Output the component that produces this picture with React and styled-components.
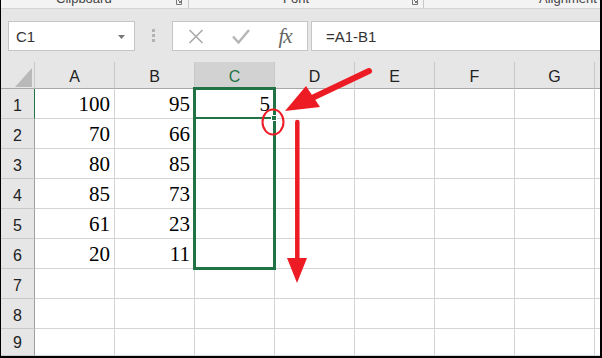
import React from "react";
import styled, { createGlobalStyle } from "styled-components";

const GlobalStyle = createGlobalStyle`
  html, body { margin: 0; padding: 0; background: #fff; }
  body { font-family: "Liberation Sans", Arial, sans-serif; }
  * { box-sizing: border-box; }
`;

const GREEN = "#217346";
const RED = "#ed1c24";

const Frame = styled.div`
  position: relative;
  width: 602px;
  height: 358px;
  overflow: hidden;
  border-left: 1px solid #000;
  border-right: 2px solid #000;
  border-bottom: 2px solid #000;
  background: #fff;
`;

const Ribbon = styled.div`
  display: flex;
  height: 9px;
  background: #f3f3f3;
  border-bottom: 1px solid #d4d4d4;
  overflow: hidden;
`;

const Group = styled.div`
  display: flex;
  align-items: flex-start;
  width: ${(p) => p.$w}px;
  flex: ${(p) => (p.$grow ? "1" : "none")};
  padding-left: ${(p) => p.$pl}px;
  padding-right: ${(p) => p.$pr || 0}px;
  border-right: ${(p) => (p.$last ? "none" : "1px solid #c8c8c8")};
  height: 8px;
`;

const GroupLabel = styled.span`
  font-size: 13px;
  line-height: 13px;
  margin-top: -8px;
  color: #444;
  white-space: nowrap;
`;

const Launcher = styled.svg`
  margin-left: auto;
  display: block;
`;

const Band = styled.div`
  display: flex;
  align-items: flex-start;
  height: 53px;
  padding: 12px 0 0 7px;
  background: #e6e6e6;
`;

const NameBox = styled.div`
  display: flex;
  align-items: center;
  justify-content: space-between;
  width: 127px;
  height: 30px;
  padding: 1px 9px 0 7px;
  background: #fff;
  border: 1px solid #c6c6c6;
  font-size: 15px;
  color: #333;
`;

const Grip = styled.div`
  display: flex;
  flex-direction: column;
  gap: 2px;
  margin: 8px 0 0 17px;
`;

const GripDot = styled.span`
  display: block;
  width: 3px;
  height: 3px;
  background: #b3b3b3;
`;

const FxBox = styled.div`
  display: flex;
  width: 136px;
  height: 30px;
  margin-left: 17px;
  background: #fff;
  border: 1px solid #c6c6c6;
`;

const FxButton = styled.div`
  display: flex;
  align-items: center;
  justify-content: center;
  width: ${(p) => p.$w}px;
  height: 100%;
`;

const FxLabel = styled.span`
  font-family: "Liberation Serif", "Times New Roman", serif;
  font-style: italic;
  font-size: 21px;
  color: #666;
  letter-spacing: -1px;
  margin-top: 1px;
`;

const FormulaInput = styled.div`
  flex: 1;
  display: flex;
  align-items: center;
  height: 30px;
  margin-left: 3px;
  padding: 1px 0 0 14px;
  background: #fff;
  border: 1px solid #c6c6c6;
  border-right: none;
  font-size: 15px;
  color: #333;
`;

const Sheet = styled.div`
  position: relative;
  display: grid;
  grid-template-columns: 34px repeat(7, 80px) 1fr;
  grid-template-rows: 27px repeat(8, 30px) 27px;
`;

const Corner = styled.div`
  position: relative;
  background: #e6e6e6;
  border-right: 1px solid #c8c8c8;
  border-bottom: 1px solid #a8a8a8;
`;

const CornerTri = styled.svg`
  position: absolute;
  left: 0;
  top: 0;
`;

const ColHead = styled.div`
  display: flex;
  align-items: flex-end;
  justify-content: center;
  padding-bottom: 3px;
  background: ${(p) => (p.$active ? "#d2d2d2" : "#e6e6e6")};
  color: ${(p) => (p.$active ? GREEN : "#222")};
  border-right: ${(p) => (p.$last ? "none" : "1px solid #c8c8c8")};
  border-bottom: 1px solid #a8a8a8;
  font-size: 16px;
  line-height: 16px;
`;

const RowHead = styled.div`
  display: flex;
  align-items: flex-end;
  justify-content: center;
  padding-bottom: 4px;
  background: #e6e6e6;
  color: #222;
  border-right: 1px solid ${(p) => (p.$active ? GREEN : "#a0a0a0")};
  border-bottom: 1px solid #c8c8c8;
  font-size: 16px;
  line-height: 16px;
`;

const Cell = styled.div`
  display: flex;
  align-items: flex-end;
  justify-content: flex-end;
  padding: 0 4px 3px 0;
  border-right: ${(p) => (p.$last ? "none" : "1px solid #d4d4d4")};
  border-bottom: 1px solid #d4d4d4;
  font-family: "Liberation Serif", "Times New Roman", serif;
  font-size: 21px;
  line-height: 21px;
  color: #000;
`;

const Selection = styled.div`
  position: absolute;
  left: 192px;
  top: 25px;
  width: 83px;
  height: 183px;
  border: 3px solid ${GREEN};
  pointer-events: none;
`;

const ActiveLine = styled.div`
  position: absolute;
  left: 195px;
  top: 55px;
  width: 77px;
  height: 2px;
  background: ${GREEN};
`;

const FillHandle = styled.div`
  position: absolute;
  left: 270px;
  top: 53px;
  width: 6px;
  height: 6px;
  background: ${GREEN};
  border: 1px solid #fff;
`;

const Annotations = styled.svg`
  position: absolute;
  left: -1px;
  top: 0;
  pointer-events: none;
`;

const columns = ["A", "B", "C", "D", "E", "F", "G", ""];
const data = [
  [100, 95, 5],
  [70, 66],
  [80, 85],
  [85, 73],
  [61, 23],
  [20, 11],
  [],
  [],
  [],
];

function LauncherIcon() {
  return (
    <Launcher width="6" height="5" viewBox="0 0 6 5">
      <path d="M0.5 0 V4.5 H5.5 V0" fill="none" stroke="#777" strokeWidth="1" />
      <path d="M2 0 L4.5 2.5 M4.5 1 V2.5 H3" fill="none" stroke="#777" strokeWidth="1" />
    </Launcher>
  );
}

export default function App() {
  return (
    <>
      <GlobalStyle />
      <Frame>
        <Ribbon>
          <Group $w={188} $pl={55} $pr={6}>
            <GroupLabel>Clipboard</GroupLabel>
            <LauncherIcon />
          </Group>
          <Group $w={235} $pl={94} $pr={5}>
            <GroupLabel>Font</GroupLabel>
            <LauncherIcon />
          </Group>
          <Group $grow $pl={115} $last>
            <GroupLabel>Alignment</GroupLabel>
          </Group>
        </Ribbon>

        <Band>
          <NameBox>
            <span>C1</span>
            <svg width="7" height="4" viewBox="0 0 7 4">
              <path d="M0 0 H7 L3.5 4 Z" fill="#777" />
            </svg>
          </NameBox>
          <Grip>
            <GripDot />
            <GripDot />
            <GripDot />
          </Grip>
          <FxBox>
            <FxButton $w={45}>
              <svg width="16" height="15" viewBox="0 0 16 15">
                <path d="M1.5 1 L14.5 14 M14.5 1 L1.5 14" stroke="#a9a9a9" strokeWidth="1.6" fill="none" />
              </svg>
            </FxButton>
            <FxButton $w={45}>
              <svg width="18" height="15" viewBox="0 0 18 15">
                <path d="M1 7.5 L6.5 13.5 L17 1" stroke="#b5b5b5" strokeWidth="2.4" fill="none" />
              </svg>
            </FxButton>
            <FxButton $w={44}>
              <FxLabel>fx</FxLabel>
            </FxButton>
          </FxBox>
          <FormulaInput>=A1-B1</FormulaInput>
        </Band>

        <Sheet>
          <Corner>
            <CornerTri width="34" height="27" viewBox="0 0 34 27">
              <path d="M14 25 H31 V6 Z" fill="#b9b9b9" />
            </CornerTri>
          </Corner>
          {columns.map((c, i) => (
            <ColHead key={"h" + i} $active={c === "C"} $last={i === columns.length - 1}>
              {c}
            </ColHead>
          ))}
          {data.map((row, r) => (
            <React.Fragment key={"r" + r}>
              <RowHead $active={r === 0}>{r + 1}</RowHead>
              {columns.map((c, i) => (
                <Cell key={"c" + r + "-" + i} $last={i === columns.length - 1}>
                  {row[i] !== undefined ? row[i] : ""}
                </Cell>
              ))}
            </React.Fragment>
          ))}
          <Selection />
          <ActiveLine />
          <FillHandle />
        </Sheet>

        <Annotations width="602" height="358" viewBox="0 0 602 358">
          <ellipse cx="273" cy="122" rx="10.5" ry="12.5" fill="none" stroke={RED} strokeWidth="2" />
          <line x1="310" y1="99" x2="369" y2="71" stroke={RED} strokeWidth="6" strokeLinecap="round" />
          <polygon points="285,111 306,86 320,107" fill={RED} />
          <line x1="297.3" y1="122" x2="297.3" y2="260" stroke={RED} strokeWidth="4.5" strokeLinecap="round" />
          <polygon points="287,258 307,258 297,283" fill={RED} />
        </Annotations>
      </Frame>
    </>
  );
}
